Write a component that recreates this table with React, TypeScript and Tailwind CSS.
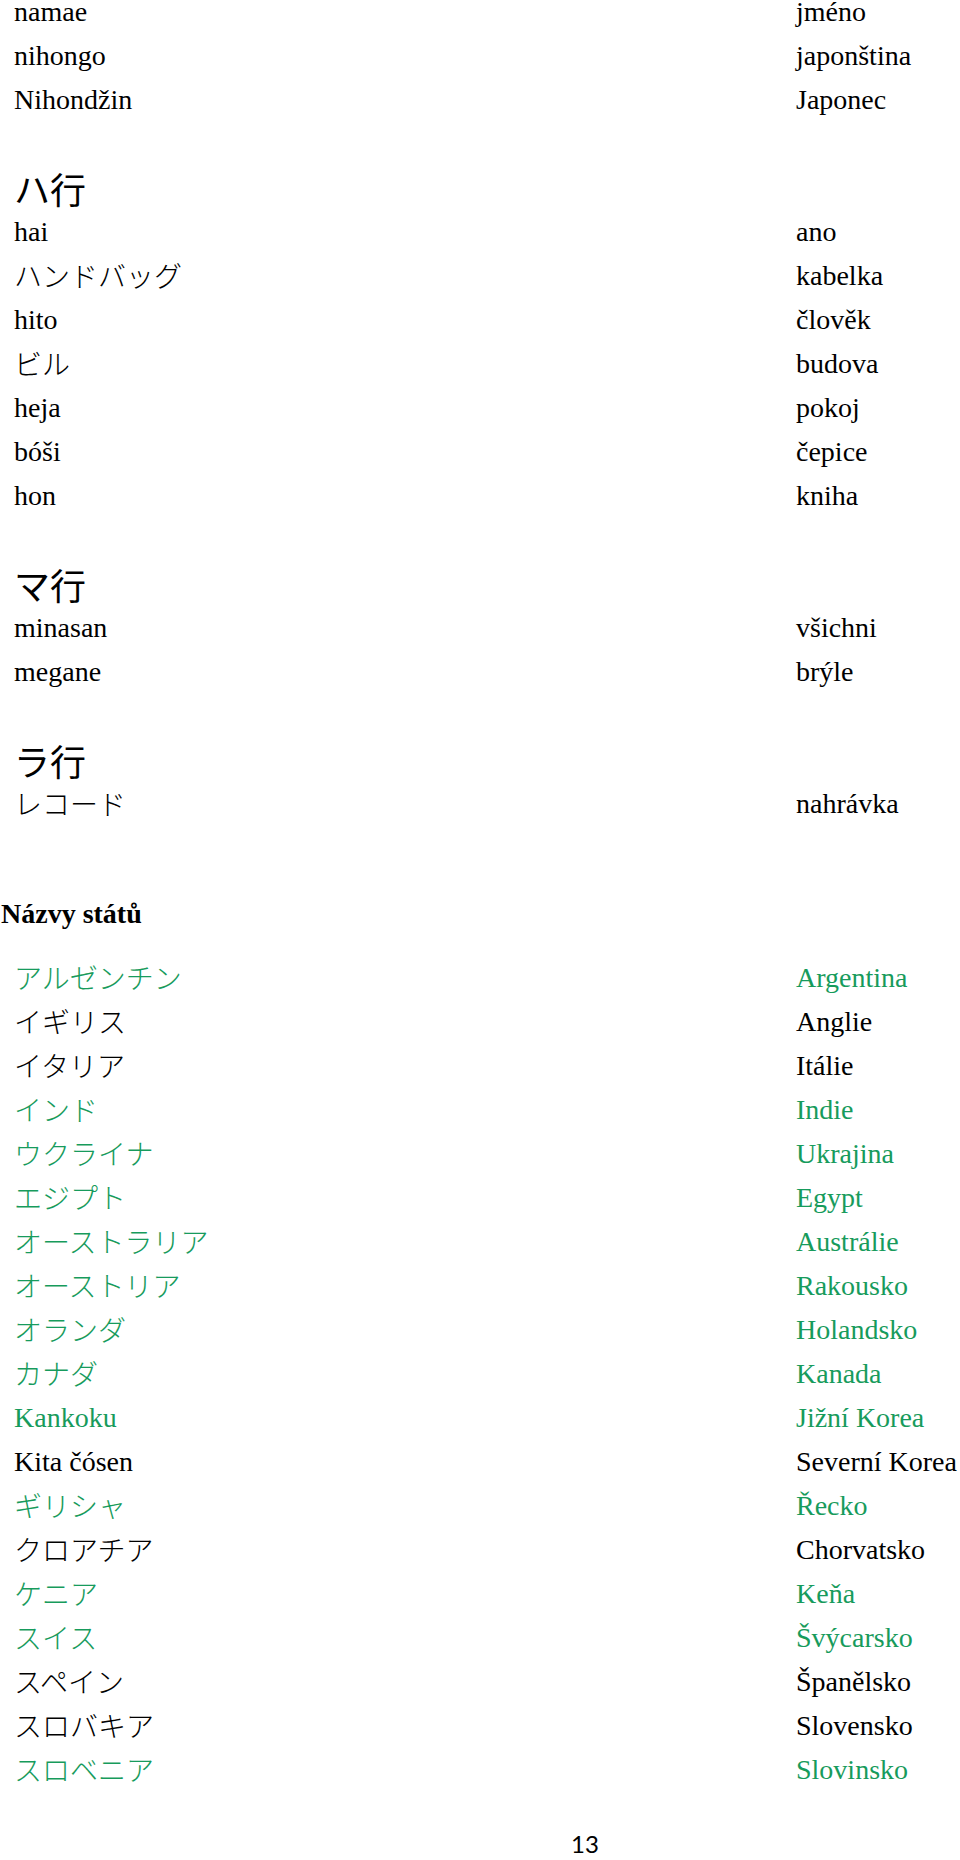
type Pair = { left: string; right?: string; green?: boolean };

const intro: Pair[] = [
  { left: 'namae', right: 'jméno' },
  { left: 'nihongo', right: 'japonština' },
  { left: 'Nihondžin', right: 'Japonec' },
];

const groups: { title: string; items: Pair[] }[] = [
  {
    title: 'ハ行',
    items: [
      { left: 'hai', right: 'ano' },
      { left: 'ハンドバッグ', right: 'kabelka' },
      { left: 'hito', right: 'člověk' },
      { left: 'ビル', right: 'budova' },
      { left: 'heja', right: 'pokoj' },
      { left: 'bóši', right: 'čepice' },
      { left: 'hon', right: 'kniha' },
    ],
  },
  {
    title: 'マ行',
    items: [
      { left: 'minasan', right: 'všichni' },
      { left: 'megane', right: 'brýle' },
    ],
  },
  {
    title: 'ラ行',
    items: [{ left: 'レコード', right: 'nahrávka' }],
  },
];

const countries: Pair[] = [
  { left: 'アルゼンチン', right: 'Argentina', green: true },
  { left: 'イギリス', right: 'Anglie' },
  { left: 'イタリア', right: 'Itálie' },
  { left: 'インド', right: 'Indie', green: true },
  { left: 'ウクライナ', right: 'Ukrajina', green: true },
  { left: 'エジプト', right: 'Egypt', green: true },
  { left: 'オーストラリア', right: 'Austrálie', green: true },
  { left: 'オーストリア', right: 'Rakousko', green: true },
  { left: 'オランダ', right: 'Holandsko', green: true },
  { left: 'カナダ', right: 'Kanada', green: true },
  { left: 'Kankoku', right: 'Jižní Korea', green: true },
  { left: 'Kita čósen', right: 'Severní Korea' },
  { left: 'ギリシャ', right: 'Řecko', green: true },
  { left: 'クロアチア', right: 'Chorvatsko' },
  { left: 'ケニア', right: 'Keňa', green: true },
  { left: 'スイス', right: 'Švýcarsko', green: true },
  { left: 'スペイン', right: 'Španělsko' },
  { left: 'スロバキア', right: 'Slovensko' },
  { left: 'スロベニア', right: 'Slovinsko', green: true },
];

// katakana sits a touch lower in the original (mincho face)
const isKana = (s: string) => /[\u3040-\u30ff]/.test(s);

function Row({ pair }: { pair: Pair }) {
  return (
    <div
      className={`grid grid-cols-[782px_1fr] h-[44px] pl-[14px] leading-[44px] whitespace-nowrap ${
        pair.green ? 'text-[#179b5c]' : 'text-black'
      }`}
    >
      <span className={isKana(pair.left) ? 'pt-[2px]' : ''}>{pair.left}</span>
      <span>{pair.right}</span>
    </div>
  );
}

export default function App() {
  return (
    <div className="h-[1860px] w-[960px] overflow-hidden bg-white">
      <div className="-mt-[10px] font-['Liberation_Serif','Noto_Sans_CJK_JP',serif] text-[28px] font-light">
        {intro.map((p) => (
          <Row key={p.left} pair={p} />
        ))}

        {groups.map((g) => (
          <section key={g.title} className="pt-[44px]">
            <h2 className="h-[44px] pl-[14px] font-['Noto_Sans_CJK_JP',sans-serif] text-[36px] leading-[44px] font-normal text-black">
              {g.title}
            </h2>
            {g.items.map((p) => (
              <Row key={p.left} pair={p} />
            ))}
          </section>
        ))}

        {/* Country names */}
        <h2 className="mt-[66px] h-[44px] pl-[1px] text-[28px] leading-[44px] font-bold text-black">
          Názvy států
        </h2>
        <div className="mt-[20px]">
          {countries.map((p) => (
            <Row key={p.left} pair={p} />
          ))}
        </div>

        <p className="mt-[40px] h-[24px] pl-[571px] font-['Lato',sans-serif] text-[24px] leading-[24px] font-normal text-black">
          13
        </p>
      </div>
    </div>
  );
}
